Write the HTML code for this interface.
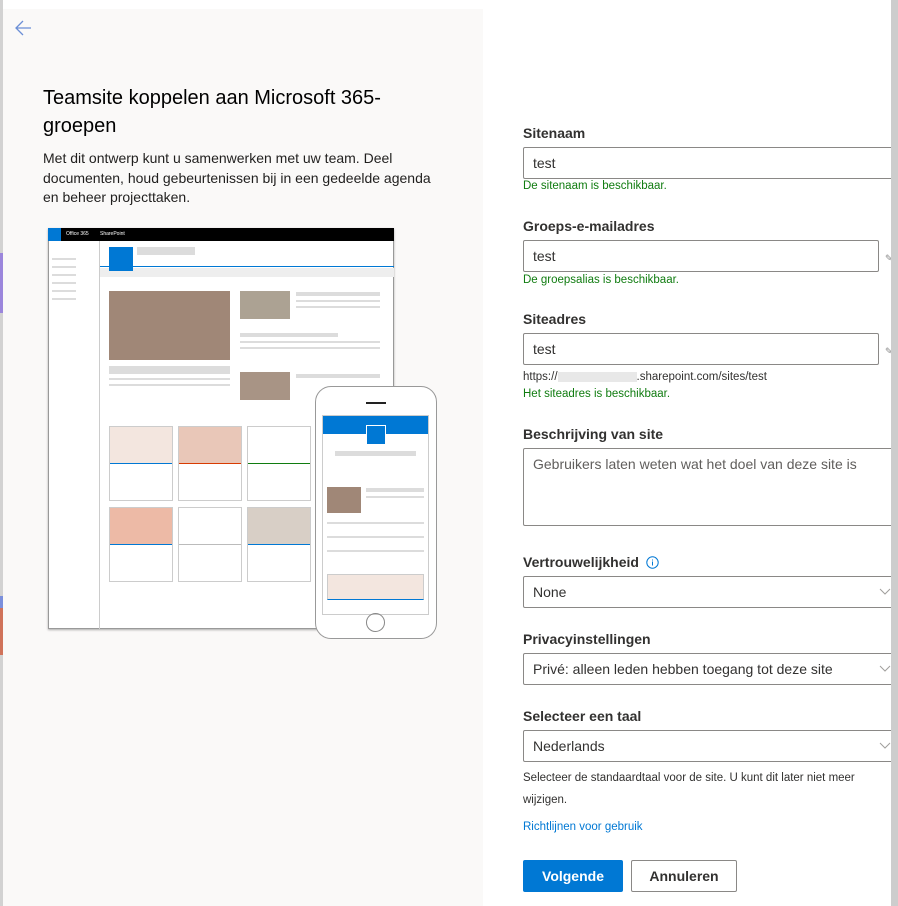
<!DOCTYPE html>
<html><head><meta charset="utf-8"><style>
*{box-sizing:border-box;margin:0;padding:0}
body{width:898px;height:906px;overflow:hidden;background:#fff;font-family:"Liberation Sans",sans-serif;position:relative;color:#323130}
.a{position:absolute}
.lbl{position:absolute;left:523px;font-size:14px;font-weight:bold;color:#323130}
.inp{position:absolute;left:523px;height:32px;border:1px solid #8a8886;border-radius:2px;font-size:14px;padding:7px 9px;color:#323130;background:#fff}
.ok{position:absolute;left:523px;font-size:11.5px;color:#107c10}
.chev{position:absolute;top:9px}
.g{position:absolute;background:#dcdcdc}
</style></head><body>
<div class="a" style="left:0;top:0;width:3px;height:906px;background:#d2d2d2"></div>
<div class="a" style="left:0;top:253px;width:3px;height:60px;background:#9b86dc"></div>
<div class="a" style="left:0;top:596px;width:3px;height:12px;background:#7a8fdc"></div>
<div class="a" style="left:0;top:608px;width:3px;height:47px;background:#d0735a"></div>
<div class="a" style="left:3px;top:9px;width:480px;height:897px;background:#faf9f8"></div>
<svg class="a" style="left:14px;top:19px" width="20" height="18" viewBox="0 0 20 18"><path d="M17 9H2M9 2L2 9l7 7" fill="none" stroke="#6b8fd6" stroke-width="1.3"/></svg>
<div class="a" style="left:43px;top:84px;width:400px;font-size:20px;line-height:28px;color:#000">Teamsite koppelen aan Microsoft 365-groepen</div>
<div class="a" style="left:43px;top:149px;width:398px;font-size:14px;line-height:19.5px;color:#201f1e">Met dit ontwerp kunt u samenwerken met uw team. Deel documenten, houd gebeurtenissen bij in een gedeelde agenda en beheer projecttaken.</div>

<!-- mockup -->
<div class="a" style="left:48px;top:228px;width:346px;height:401px;background:#fff;border:1px solid #999;box-shadow:0 1px 2px #aaa"></div>
<div class="a" style="left:48px;top:228px;width:346px;height:13px;background:#000;font-size:5px;color:#fff;line-height:13px">
<span class="a" style="left:0;top:0;width:13px;height:13px;background:#0078d4"></span><span class="a" style="left:18px">Office 365</span><span class="a" style="left:52px">SharePoint</span></div>
<div class="a" style="left:99px;top:241px;width:1px;height:388px;background:#ccc"></div>
<div class="g" style="left:52px;top:258px;width:24px;height:2px"></div><div class="g" style="left:52px;top:266px;width:24px;height:2px"></div><div class="g" style="left:52px;top:274px;width:24px;height:2px"></div><div class="g" style="left:52px;top:282px;width:24px;height:2px"></div><div class="g" style="left:52px;top:290px;width:24px;height:2px"></div><div class="g" style="left:52px;top:298px;width:24px;height:2px"></div>
<div class="a" style="left:100px;top:266px;width:294px;height:1px;background:#0078d4"></div>
<div class="a" style="left:100px;top:268px;width:294px;height:9px;background:#eee"></div>
<div class="a" style="left:109px;top:247px;width:24px;height:24px;background:#0078d4"></div>
<div class="g" style="left:137px;top:247px;width:58px;height:8px"></div>
<div class="a" style="left:109px;top:291px;width:121px;height:69px;background:#a08777"></div>
<div class="a" style="left:240px;top:291px;width:50px;height:28px;background:#aca293"></div>
<div class="g" style="left:296px;top:292px;width:84px;height:4px"></div><div class="g" style="left:296px;top:300px;width:84px;height:2px"></div><div class="g" style="left:296px;top:306px;width:84px;height:2px"></div>
<div class="g" style="left:240px;top:333px;width:98px;height:4px"></div><div class="g" style="left:240px;top:341px;width:140px;height:2px"></div><div class="g" style="left:240px;top:347px;width:140px;height:2px"></div>
<div class="g" style="left:109px;top:366px;width:121px;height:8px"></div><div class="g" style="left:109px;top:378px;width:121px;height:2px"></div><div class="g" style="left:109px;top:384px;width:121px;height:2px"></div>
<div class="a" style="left:240px;top:372px;width:50px;height:28px;background:#a89485"></div>
<div class="g" style="left:296px;top:374px;width:84px;height:4px"></div>
<div class="a" style="left:109px;top:426px;width:64px;height:75px;border:1px solid #ccc;background:linear-gradient(#f3e6df 0 36px,#0078d4 36px 37px,#fff 37px)"></div>
<div class="a" style="left:178px;top:426px;width:64px;height:75px;border:1px solid #ccc;background:linear-gradient(#e9c7b8 0 36px,#d83b01 36px 37px,#fff 37px)"></div>
<div class="a" style="left:247px;top:426px;width:64px;height:75px;border:1px solid #ccc;background:linear-gradient(#fff 0 36px,#107c10 36px 37px,#fff 37px)"></div>
<div class="a" style="left:109px;top:507px;width:64px;height:75px;border:1px solid #ccc;background:linear-gradient(#edbaa6 0 36px,#0078d4 36px 37px,#fff 37px)"></div>
<div class="a" style="left:178px;top:507px;width:64px;height:75px;border:1px solid #ccc;background:linear-gradient(#fff 0 36px,#bbb 36px 37px,#fff 37px)"></div>
<div class="a" style="left:247px;top:507px;width:64px;height:75px;border:1px solid #ccc;background:linear-gradient(#d8cfc6 0 36px,#0078d4 36px 37px,#fff 37px)"></div>
<!-- phone -->
<div class="a" style="left:315px;top:386px;width:122px;height:253px;background:#fff;border:1px solid #999;border-radius:16px"></div>
<div class="a" style="left:366px;top:402px;width:20px;height:2px;background:#222"></div>
<div class="a" style="left:322px;top:415px;width:107px;height:200px;border:1px solid #ccc;background:#fff"></div>
<div class="a" style="left:323px;top:416px;width:105px;height:18px;background:#0078d4"></div>
<div class="a" style="left:366px;top:425px;width:20px;height:20px;background:#0078d4;border:1px solid #fff"></div>
<div class="g" style="left:335px;top:451px;width:81px;height:5px"></div>
<div class="a" style="left:327px;top:487px;width:34px;height:26px;background:#a08777"></div>
<div class="g" style="left:366px;top:488px;width:58px;height:4px"></div><div class="g" style="left:366px;top:496px;width:58px;height:2px"></div>
<div class="g" style="left:327px;top:522px;width:97px;height:2px"></div><div class="g" style="left:327px;top:536px;width:97px;height:2px"></div><div class="g" style="left:327px;top:550px;width:97px;height:2px"></div>
<div class="a" style="left:327px;top:574px;width:97px;height:26px;border:1px solid #ccc;background:#f3e6df;border-bottom:1px solid #0078d4"></div>
<div class="a" style="left:366px;top:613px;width:19px;height:19px;border:1px solid #888;border-radius:50%"></div>

<!-- form -->
<div class="lbl" style="top:125px">Sitenaam</div>
<div class="inp" style="top:147px;width:380px">test</div>
<div class="ok" style="top:180px">De sitenaam is beschikbaar.</div>
<div class="lbl" style="top:218px">Groeps-e-mailadres</div>
<div class="inp" style="top:240px;width:356px">test</div>
<div class="ok" style="top:274px">De groepsalias is beschikbaar.</div>
<div class="lbl" style="top:311px">Siteadres</div>
<div class="inp" style="top:333px;width:356px">test</div>
<div class="a" style="left:523px;top:371px;font-size:11.5px;color:#323130">https://<span style="display:inline-block;width:79px;height:10px;background:#e8e8e8;vertical-align:middle"></span>.sharepoint.com/sites/test</div>
<div class="ok" style="top:388px">Het siteadres is beschikbaar.</div>
<div class="a" style="left:885px;top:253px;font-size:9px;color:#888">&#x270E;</div>
<div class="a" style="left:885px;top:346px;font-size:9px;color:#888">&#x270E;</div>
<div class="lbl" style="top:426px">Beschrijving van site</div>
<div class="inp" style="top:448px;width:370px;height:78px;color:#605e5c">Gebruikers laten weten wat het doel van deze site is</div>
<div class="lbl" style="top:554px">Vertrouwelijkheid <svg style="vertical-align:-2px;margin-left:3px" width="13" height="13" viewBox="0 0 13 13"><circle cx="6.5" cy="6.5" r="5.7" fill="none" stroke="#0078d4"/><path d="M6.5 5.5v4M6.5 3.5v1" stroke="#0078d4"/></svg></div>
<div class="inp" style="top:576px;width:380px">None<svg class="chev" style="left:355px" width="12" height="12"><path d="M1 3l5 5 5-5" fill="none" stroke="#a19f9d"/></svg></div>
<div class="lbl" style="top:631px">Privacyinstellingen</div>
<div class="inp" style="top:653px;width:380px">Privé: alleen leden hebben toegang tot deze site<svg class="chev" style="left:355px" width="12" height="12"><path d="M1 3l5 5 5-5" fill="none" stroke="#a19f9d"/></svg></div>
<div class="lbl" style="top:708px">Selecteer een taal</div>
<div class="inp" style="top:730px;width:380px">Nederlands<svg class="chev" style="left:355px" width="12" height="12"><path d="M1 3l5 5 5-5" fill="none" stroke="#a19f9d"/></svg></div>
<div class="a" style="left:523px;top:767px;width:360px;font-size:11.5px;line-height:22px;color:#323130">Selecteer de standaardtaal voor de site. U kunt dit later niet meer wijzigen.</div>
<div class="a" style="left:523px;top:821px;font-size:11.5px;color:#0078d4">Richtlijnen voor gebruik</div>
<div class="a" style="left:523px;top:860px;width:100px;height:32px;background:#0078d4;border-radius:2px;color:#fff;font-weight:bold;font-size:14px;text-align:center;line-height:32px">Volgende</div>
<div class="a" style="left:631px;top:860px;width:106px;height:32px;border:1px solid #8a8886;border-radius:2px;color:#323130;font-weight:bold;font-size:14px;text-align:center;line-height:30px">Annuleren</div>
<div class="a" style="left:891px;top:0;width:7px;height:906px;background:#cdcdcd"></div>
</body></html>
